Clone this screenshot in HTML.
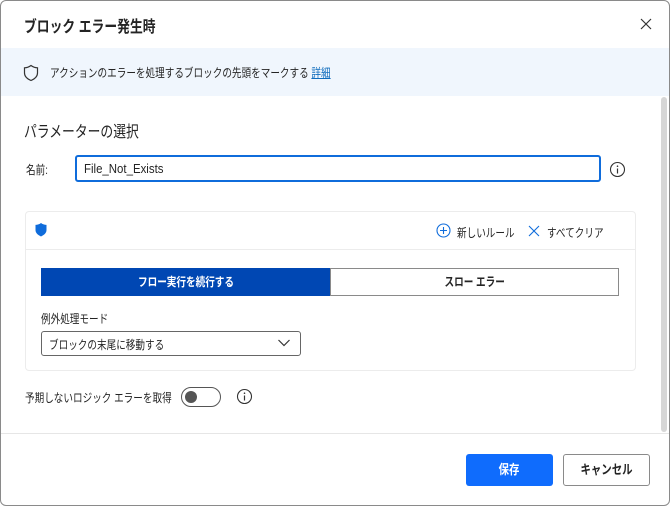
<!DOCTYPE html>
<html><head><meta charset="utf-8"><style>
*{box-sizing:border-box;margin:0;padding:0}
body{width:670px;height:506px;background:#fff;font-family:"Liberation Sans","Noto Sans CJK JP",sans-serif;color:#242424;position:relative;overflow:hidden}
.abs{position:absolute;white-space:nowrap}
.c{transform:scaleX(.8);transform-origin:left top}
.cc{display:inline-block;transform:scaleX(.8);transform-origin:center}
.frame{position:absolute;left:0;top:0;width:670px;height:506px;border:1px solid #8a8a8a;border-radius:6px}
</style></head><body>
<div class="frame"></div>
<div class="abs c" style="left:24px;top:13px;font-size:16px;font-weight:bold">ブロック エラー発生時</div>
<svg class="abs" style="left:639px;top:17px" width="14" height="14"><path d="M2 2L12 12M12 2L2 12" stroke="#333" stroke-width="1.2"/></svg>
<div class="abs" style="left:1px;top:48px;width:668px;height:48px;background:#f0f6fd"></div>
<svg class="abs" style="left:23px;top:64px" width="16" height="18"><path d="M8 1.5C6 3 4 3.7 1.5 3.8V9c0 3.5 3 6 6.5 7.5C11.5 15 14.5 12.5 14.5 9V3.8C12 3.7 10 3 8 1.5Z" fill="none" stroke="#333" stroke-width="1.2"/></svg>
<div class="abs c" style="left:50px;top:64px;font-size:12px">アクションのエラーを処理するブロックの先頭をマークする <span style="color:#0f6cbd;text-decoration:underline">詳細</span></div>
<div class="abs" style="left:661px;top:97px;width:6px;height:335px;background:#d6d6d6;border-radius:3px"></div>
<div class="abs c" style="left:24px;top:118px;font-size:16px">パラメーターの選択</div>
<div class="abs c" style="left:26px;top:161px;font-size:12px">名前:</div>
<div class="abs" style="left:75px;top:155px;width:526px;height:27px;border:2px solid #0f6cdb;border-radius:3px"></div>
<div class="abs" style="left:84px;top:161px;font-size:13px;transform:scaleX(.88);transform-origin:left top">File_Not_Exists</div>
<svg class="abs" style="left:609px;top:161px" width="17" height="17"><circle cx="8.5" cy="8.5" r="7" fill="none" stroke="#333" stroke-width="1.1"/><path d="M8.5 7.5V12.5" stroke="#333" stroke-width="1.2"/><circle cx="8.5" cy="5.2" r=".8" fill="#333"/></svg>
<div class="abs" style="left:25px;top:211px;width:611px;height:160px;border:1px solid #ececec;border-radius:4px"></div>
<div class="abs" style="left:26px;top:249px;width:609px;height:1px;background:#ececec"></div>
<svg class="abs" style="left:34px;top:222px" width="14" height="16"><path d="M7 1C5.3 2.3 3.5 2.8 1.5 2.9V8c0 3 2.5 5 5.5 6.5C10 13 12.5 11 12.5 8V2.9C10.5 2.8 8.7 2.3 7 1Z" fill="#0f6cdb"/></svg>
<svg class="abs" style="left:436px;top:223px" width="15" height="15"><circle cx="7.5" cy="7.5" r="6.5" fill="none" stroke="#0f6cdb" stroke-width="1.1"/><path d="M7.5 4V11M4 7.5H11" stroke="#0f6cdb" stroke-width="1.1"/></svg>
<div class="abs c" style="left:457px;top:224px;font-size:12px">新しいルール</div>
<svg class="abs" style="left:528px;top:225px" width="12" height="12"><path d="M1 1L11 11M11 1L1 11" stroke="#0f6cdb" stroke-width="1.1"/></svg>
<div class="abs c" style="left:547px;top:224px;font-size:12px">すべてクリア</div>
<div class="abs" style="left:41px;top:268px;width:290px;height:28px;background:#0047b3;color:#fff;font-size:12px;font-weight:bold;text-align:center;line-height:28px"><span class="cc">フロー実行を続行する</span></div>
<div class="abs" style="left:330px;top:268px;width:289px;height:28px;border:1px solid #8a8a8a;font-size:12px;font-weight:bold;text-align:center;line-height:26px"><span class="cc">スロー エラー</span></div>
<div class="abs c" style="left:41px;top:310px;font-size:12px">例外処理モード</div>
<div class="abs" style="left:41px;top:331px;width:260px;height:25px;border:1px solid #666;border-radius:3px"></div>
<div class="abs c" style="left:49px;top:336px;font-size:12px">ブロックの末尾に移動する</div>
<svg class="abs" style="left:277px;top:338px" width="14" height="10"><path d="M1.5 2L7 7.5L12.5 2" fill="none" stroke="#333" stroke-width="1.2"/></svg>
<div class="abs c" style="left:25px;top:389px;font-size:12px">予期しないロジック エラーを取得</div>
<div class="abs" style="left:181px;top:387px;width:40px;height:20px;border:1px solid #555;border-radius:10px"></div>
<div class="abs" style="left:185px;top:391px;width:12px;height:12px;background:#555;border-radius:50%"></div>
<svg class="abs" style="left:236px;top:388px" width="17" height="17"><circle cx="8.5" cy="8.5" r="7" fill="none" stroke="#333" stroke-width="1.1"/><path d="M8.5 7.5V12.5" stroke="#333" stroke-width="1.2"/><circle cx="8.5" cy="5.2" r=".8" fill="#333"/></svg>
<div class="abs" style="left:1px;top:433px;width:668px;height:1px;background:#e6e6e6"></div>
<div class="abs" style="left:466px;top:454px;width:87px;height:32px;background:#0f6cfd;border-radius:3px;color:#fff;font-size:13px;font-weight:bold;text-align:center;line-height:32px"><span class="cc">保存</span></div>
<div class="abs" style="left:563px;top:454px;width:87px;height:32px;border:1px solid #8a8a8a;border-radius:3px;font-size:13px;font-weight:bold;text-align:center;line-height:30px"><span class="cc">キャンセル</span></div>
</body></html>
